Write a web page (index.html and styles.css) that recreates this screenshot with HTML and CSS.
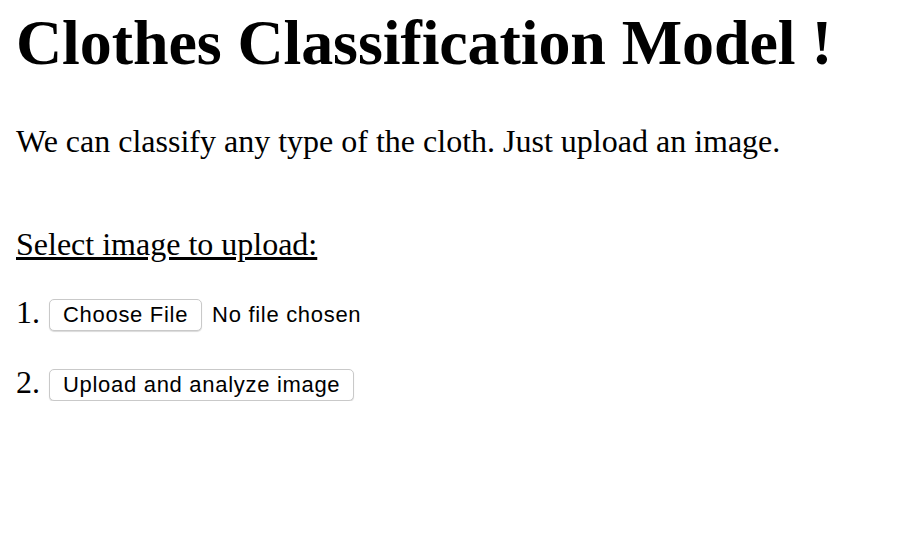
FILE: index.html
```html
<!DOCTYPE html>
<html>
<head>
<meta charset="utf-8">
<link rel="stylesheet" href="styles.css">
</head>
<body>
<h1 class="title">Clothes Classification Model !</h1>
<p class="lead">We can classify any type of the cloth. Just upload an image.</p>
<form class="upload">
  <p class="label">Select image to upload:</p>
  <div class="step step-first"><span class="num">1.</span><span class="btn">Choose File</span><span class="note">No file chosen</span></div>
  <div class="step step-second"><span class="num">2.</span><span class="btn">Upload and analyze image</span></div>
</form>
</body>
</html>
```
FILE: styles.css
```css
body {
  margin: 0;
  padding: 0 16px;
  font-family: "Liberation Serif", "Times New Roman", serif;
  color: #000;
  background: #fff;
}
.title {
  font-size: 64px;
  font-weight: bold;
  margin: 0;
  padding-top: 6px;
  line-height: 74px;
  letter-spacing: -0.1px;
}
.lead {
  font-size: 32px;
  margin: 43px 0 0;
  line-height: 36px;
}
.upload {
  margin: 0;
}
.label {
  font-size: 32px;
  text-decoration: underline;
  margin: 67px 0 0;
  line-height: 36px;
}
.step {
  display: flex;
  align-items: center;
  font-size: 32px;
}
.step-first {
  margin-top: 37px;
}
.step-second {
  margin-top: 38px;
}
.num {
  line-height: 26px;
  margin: 0 9px 6px 0;
}
.btn {
  font-family: "Liberation Sans", Arial, sans-serif;
  font-size: 22px;
  letter-spacing: 0.7px;
  line-height: 30px;
  padding: 0 13px 0 13px;
  border: 1px solid #c9c9c9;
  border-radius: 5px;
  box-shadow: 0 1px 1px rgba(0,0,0,0.15);
  background: #fff;
}
.note {
  font-family: "Liberation Sans", Arial, sans-serif;
  font-size: 22px;
  letter-spacing: 0.7px;
  margin-left: 10px;
}
```
